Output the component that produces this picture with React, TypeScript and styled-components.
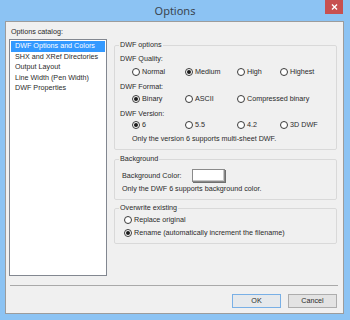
import styled, { createGlobalStyle } from 'styled-components';

const GlobalStyle = createGlobalStyle`
  body {
    margin: 0;
    font-family: 'Liberation Sans', Arial, sans-serif;
  }
  * {
    box-sizing: border-box;
  }
`;

const Window = styled.div`
  width: 350px;
  height: 320px;
  background: #8cc3f3;
  display: flex;
  flex-direction: column;
`;

const TitleBar = styled.div`
  height: 21px;
  display: grid;
  grid-template-columns: 1fr auto 1fr;
  align-items: start;
`;

const Title = styled.div`
  grid-column: 2;
  padding-top: 3px;
  font-family: 'Noto Sans', 'Open Sans', sans-serif;
  font-size: 11px;
  line-height: 16px;
  color: #3a4550;
`;

const CloseButton = styled.div`
  grid-column: 3;
  justify-self: end;
  margin-right: 7px;
  width: 18px;
  height: 14px;
  background: #c75050;
  display: flex;
  align-items: center;
  justify-content: center;
`;

const Client = styled.div`
  flex: 1;
  margin: 0 6px 6px 5px;
  border: 1px solid #9c9c9c;
  background: #f0f0f0;
  display: flex;
  flex-direction: column;
  font-size: 7.2px;
  line-height: 10px;
  color: #2a2a2a;
`;

const Body = styled.div`
  flex: 1;
  display: grid;
  grid-template-columns: 98px 223px;
  column-gap: 7px;
  padding: 5px 6px 0 3px;
`;

const CatalogColumn = styled.div`
  display: flex;
  flex-direction: column;
`;

const CatalogLabel = styled.div`
  padding-left: 2px;
  margin-bottom: 2px;
`;

const CatalogList = styled.ul`
  margin: 0;
  padding: 1px;
  list-style: none;
  height: 237px;
  background: #fff;
  border: 1px solid #828790;
`;

const CatalogItem = styled.li<{ $selected?: boolean }>`
  height: 10.5px;
  line-height: 10px;
  padding-left: 4px;
  white-space: nowrap;
  background: ${p => (p.$selected ? '#3399ff' : 'transparent')};
  color: ${p => (p.$selected ? '#fff' : '#2a2a2a')};
`;

const OptionsColumn = styled.div`
  display: flex;
  flex-direction: column;
  padding-top: 13px;
`;

const Group = styled.fieldset<{ $gap?: number }>`
  margin: ${p => p.$gap ?? 0}px 0 0 0;
  padding: 0 5px 5px 5px;
  border: 1px solid #d9d9d9;
  border-radius: 2px;
  min-width: 0;
`;

const GroupTitle = styled.legend`
  padding: 0 1px;
  margin-left: -1px;
  font-size: 7.2px;
  line-height: 10px;
`;

const FieldLabel = styled.div<{ $top: number; $indent?: number }>`
  margin-top: ${p => p.$top}px;
  padding-left: ${p => p.$indent ?? 0}px;
  white-space: nowrap;
`;

const RadioRow = styled.div<{ $top: number }>`
  margin-top: ${p => p.$top}px;
  padding-left: 12px;
  display: grid;
  grid-template-columns: 53px 52px 43px auto;
  height: 10px;
`;

const RadioStack = styled.div<{ $top: number }>`
  margin-top: ${p => p.$top}px;
  padding-left: 4px;
  height: 10px;
`;

const RadioOption = styled.label`
  display: flex;
  align-items: center;
  gap: 2px;
  white-space: nowrap;
`;

const RadioCircle = styled.span<{ $checked?: boolean }>`
  width: 8px;
  height: 8px;
  flex: none;
  border-radius: 50%;
  border: 1px solid #3a3a3a;
  background: #fff;
  display: flex;
  align-items: center;
  justify-content: center;

  &::after {
    content: '';
    width: 4px;
    height: 4px;
    border-radius: 50%;
    background: ${p => (p.$checked ? '#1a1a1a' : 'transparent')};
  }
`;

const ColorRow = styled.div`
  margin-top: 5px;
  padding-left: 2px;
  display: flex;
  align-items: center;
`;

const ColorLabel = styled.span`
  width: 70px;
  white-space: nowrap;
`;

const ColorSwatch = styled.span`
  width: 33px;
  height: 13px;
  background: #fff;
  border: 1px solid #8a8a8a;
  box-shadow: inset -1px -1px 0 #c9c9c9, 1px 1px 0 #6f6f6f;
`;

const Separator = styled.div`
  margin: 0 5px 0 4px;
  border-top: 1px solid #a9a9a9;
`;

const ButtonRow = styled.div`
  display: flex;
  justify-content: flex-end;
  gap: 7px;
  padding: 8px 6px 5px 0;
`;

const Button = styled.button<{ $primary?: boolean }>`
  width: 49px;
  height: 14px;
  padding: 0;
  font-family: 'Liberation Sans', Arial, sans-serif;
  font-size: 7.2px;
  line-height: 12px;
  color: #2a2a2a;
  border: 1px solid ${p => (p.$primary ? '#79b0e6' : '#adadad')};
  background: ${p => (p.$primary ? '#e6e9ec' : '#e3e3e3')};
`;

type Choice = { label: string; checked?: boolean };

function Radios({ top, items }: { top: number; items: Choice[] }) {
  return (
    <RadioRow $top={top}>
      {items.map(item => (
        <RadioOption key={item.label}>
          <RadioCircle $checked={item.checked} />
          {item.label}
        </RadioOption>
      ))}
    </RadioRow>
  );
}

const catalog = [
  'DWF Options and Colors',
  'SHX and XRef Directories',
  'Output Layout',
  'Line Width (Pen Width)',
  'DWF Properties',
];

export default function App() {
  return (
    <>
      <GlobalStyle />
      <Window>
        <TitleBar>
          <Title>Options</Title>
          <CloseButton>
            <svg width="7" height="6" viewBox="0 0 7 6">
              <path d="M1 0.5 L6 5.5 M6 0.5 L1 5.5" stroke="#fff" strokeWidth="1.4" />
            </svg>
          </CloseButton>
        </TitleBar>
        <Client>
          <Body>
            <CatalogColumn>
              <CatalogLabel>Options catalog:</CatalogLabel>
              <CatalogList>
                {catalog.map((name, i) => (
                  <CatalogItem key={name} $selected={i === 0}>
                    {name}
                  </CatalogItem>
                ))}
              </CatalogList>
            </CatalogColumn>
            <OptionsColumn>
              <Group>
                <GroupTitle>DWF options</GroupTitle>
                <FieldLabel $top={4}>DWF Quality:</FieldLabel>
                <Radios
                  top={3}
                  items={[{ label: 'Normal' }, { label: 'Medium', checked: true }, { label: 'High' }, { label: 'Highest' }]}
                />
                <FieldLabel $top={5}>DWF Format:</FieldLabel>
                <Radios top={2} items={[{ label: 'Binary', checked: true }, { label: 'ASCII' }, { label: 'Compressed binary' }]} />
                <FieldLabel $top={5}>DWF Version:</FieldLabel>
                <Radios
                  top={1}
                  items={[{ label: '6', checked: true }, { label: '5.5' }, { label: '4.2' }, { label: '3D DWF' }]}
                />
                <FieldLabel $top={4} $indent={12}>
                  Only the version 6 supports multi-sheet DWF.
                </FieldLabel>
              </Group>
              <Group $gap={4}>
                <GroupTitle>Background</GroupTitle>
                <ColorRow>
                  <ColorLabel>Background Color:</ColorLabel>
                  <ColorSwatch />
                </ColorRow>
                <FieldLabel $top={2} $indent={2}>
                  Only the DWF 6 supports background color.
                </FieldLabel>
              </Group>
              <Group $gap={3}>
                <GroupTitle>Overwrite existing</GroupTitle>
                <RadioStack $top={2}>
                  <RadioOption>
                    <RadioCircle />
                    Replace original
                  </RadioOption>
                </RadioStack>
                <RadioStack $top={3}>
                  <RadioOption>
                    <RadioCircle $checked />
                    Rename (automatically increment the filename)
                  </RadioOption>
                </RadioStack>
              </Group>
            </OptionsColumn>
          </Body>
          <Separator />
          <ButtonRow>
            <Button $primary>OK</Button>
            <Button>Cancel</Button>
          </ButtonRow>
        </Client>
      </Window>
    </>
  );
}
